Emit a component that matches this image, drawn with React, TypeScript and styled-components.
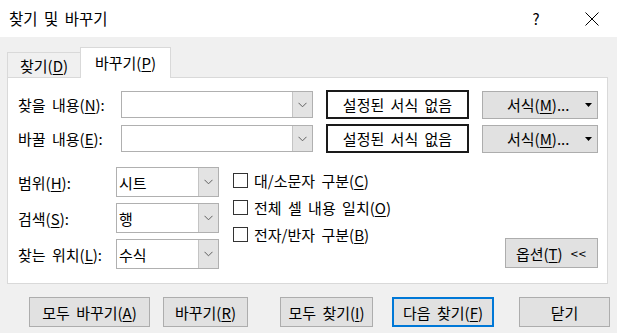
import React from "react";
import styled, { createGlobalStyle } from "styled-components";

const Global = createGlobalStyle`
  html, body { margin: 0; padding: 0; }
  body {
    width: 617px; height: 333px; overflow: hidden; background: #f0f0f0;
    font-family: "Noto Sans CJK KR", "Noto Sans", sans-serif; color: #000;
    word-spacing: 3px;
  }
  * { box-sizing: border-box; }
`;

const Window = styled.div`
  width: 617px; height: 333px; display: flex; flex-direction: column; background: #f0f0f0;
`;

const TitleBar = styled.div`
  height: 37px; flex-shrink: 0; background: #fff; display: flex; align-items: center; padding-left: 9px;
`;

const Title = styled.div`
  flex: 1; font-size: 15.5px; line-height: 1;
`;

const TitleButton = styled.div<{ $w: number; $ml?: number }>`
  width: ${(p) => p.$w}px; height: 37px; margin-left: ${(p) => p.$ml ?? 0}px;
  display: flex; align-items: center; justify-content: center; font-size: 15px;
`;

const Body = styled.div`
  flex: 1; display: flex; flex-direction: column; padding: 10px 9px 0 7px;
`;

const TabStrip = styled.div`
  height: 31px; display: flex; align-items: flex-end; margin-bottom: -1px; position: relative; z-index: 1;
`;

const Tab = styled.div<{ $active?: boolean; $w: number }>`
  width: ${(p) => p.$w}px;
  height: ${(p) => (p.$active ? 31 : 25)}px;
  margin-bottom: ${(p) => (p.$active ? 0 : 1)}px;
  background: ${(p) => (p.$active ? "#fff" : "#f0f0f0")};
  border: 1px solid #d9d9d9;
  border-bottom: none;
  border-right: ${(p) => (p.$active ? "1px solid #d9d9d9" : "none")};
  display: flex; align-items: center; justify-content: center;
  font-size: 15px; padding-bottom: ${(p) => (p.$active ? 2 : 0)}px;
`;

const Panel = styled.div`
  width: 601px; height: 207px; background: #fff; border: 1px solid #d9d9d9;
  padding: 12px 9px 0 10px; display: flex; flex-direction: column;
`;

const UpperGrid = styled.div`
  display: grid; grid-template-columns: 90px 192px 143px 116px; column-gap: 13px;
  grid-auto-rows: 29px; row-gap: 5px; align-items: center;
`;

const Label = styled.div`
  font-size: 15px; white-space: nowrap; line-height: 1;
`;

const Key = styled.span`
  text-decoration: underline; text-underline-offset: 2px; text-decoration-thickness: 1px;
`;

const Combo = styled.div<{ $h: number }>`
  height: ${(p) => p.$h}px; border: 1px solid #b0b0b0; background: #fff;
  display: flex; align-items: stretch;
`;

const ComboText = styled.div`
  flex: 1; display: flex; align-items: center; padding-left: 2px; font-size: 15px;
`;

const ComboButton = styled.div`
  width: 20px; background: #e3e3e3; border-left: 1px solid #c4c4c4;
  display: flex; align-items: center; justify-content: center;
`;

const FormatPreview = styled.div`
  height: 29px; border: 2px solid #1a1a1a; background: #fff;
  display: flex; align-items: center; justify-content: center; font-size: 15px;
`;

const Button = styled.div<{ $w?: number; $h?: number; $ml?: number; $default?: boolean }>`
  width: ${(p) => (p.$w ? `${p.$w}px` : "auto")};
  height: ${(p) => p.$h ?? 30}px;
  margin-left: ${(p) => p.$ml ?? 0}px;
  background: #e1e1e1;
  border: ${(p) => (p.$default ? "2px solid #0078d7" : "1px solid #adadad")};
  display: flex; align-items: center; justify-content: center;
  font-size: 15px; white-space: nowrap; flex-shrink: 0;
`;

const SplitButton = styled(Button)`
  justify-content: flex-start; padding: 0 5px 0 24px;
`;

const Caret = styled.svg`
  margin-left: auto;
`;

const Lower = styled.div`
  display: flex; margin-top: 14px; align-items: flex-start;
`;

const LowerGrid = styled.div`
  display: grid; grid-template-columns: 98px 103px; grid-auto-rows: 30px; row-gap: 6px; align-items: center;
`;

const CheckList = styled.div`
  margin-left: 14px; display: flex; flex-direction: column;
`;

const CheckRow = styled.div`
  height: 27px; display: flex; align-items: center; gap: 6px; font-size: 15px; white-space: nowrap;
`;

const CheckBox = styled.div`
  width: 15px; height: 15px; border: 1px solid #333; background: #fff; flex-shrink: 0;
`;

const OptionsButton = styled(Button)`
  margin-left: auto; align-self: flex-end; margin-bottom: 1px; gap: 8px;
`;

const Small = styled.span`
  font-size: 13px; letter-spacing: 1px;
`;

const BottomRow = styled.div`
  display: flex; align-items: center; margin-top: 13px; padding-left: 22px;
`;

const Chevron = () => (
  <svg width="9" height="6" viewBox="0 0 9 6">
    <polyline points="0.5,0.8 4.5,4.8 8.5,0.8" fill="none" stroke="#606060" strokeWidth="1" />
  </svg>
);

const ComboBox = ({ h, text }: { h: number; text?: string }) => (
  <Combo $h={h}>
    <ComboText>{text}</ComboText>
    <ComboButton>
      <Chevron />
    </ComboButton>
  </Combo>
);

const FormatButton = () => (
  <SplitButton $h={28}>
    <span>
      서식(<Key>M</Key>)...
    </span>
    <Caret width="7" height="4" viewBox="0 0 7 4">
      <polygon points="0,0 7,0 3.5,4" fill="#000" />
    </Caret>
  </SplitButton>
);

export default function App() {
  return (
    <>
      <Global />
      <Window>
        <TitleBar>
          <Title>찾기 및 바꾸기</Title>
          <TitleButton $w={40}>?</TitleButton>
          <TitleButton $w={50} $ml={11}>
            <svg width="14" height="14" viewBox="0 0 14 14">
              <line x1="0.5" y1="0.5" x2="13.5" y2="13.5" stroke="#000" strokeWidth="1" />
              <line x1="13.5" y1="0.5" x2="0.5" y2="13.5" stroke="#000" strokeWidth="1" />
            </svg>
          </TitleButton>
        </TitleBar>
        <Body>
          <TabStrip>
            <Tab $w={73}>
              찾기(<Key>D</Key>)
            </Tab>
            <Tab $w={91} $active>
              바꾸기(<Key>P</Key>)
            </Tab>
          </TabStrip>
          <Panel>
            <UpperGrid>
              <Label>
                찾을 내용(<Key>N</Key>):
              </Label>
              <ComboBox h={27} />
              <FormatPreview>설정된 서식 없음</FormatPreview>
              <FormatButton />
              <Label>
                바꿀 내용(<Key>E</Key>):
              </Label>
              <ComboBox h={27} />
              <FormatPreview>설정된 서식 없음</FormatPreview>
              <FormatButton />
            </UpperGrid>
            <Lower>
              <LowerGrid>
                <Label>
                  범위(<Key>H</Key>):
                </Label>
                <ComboBox h={30} text="시트" />
                <Label>
                  검색(<Key>S</Key>):
                </Label>
                <ComboBox h={30} text="행" />
                <Label>
                  찾는 위치(<Key>L</Key>):
                </Label>
                <ComboBox h={30} text="수식" />
              </LowerGrid>
              <CheckList>
                <CheckRow>
                  <CheckBox />
                  <span>
                    대/소문자 구분(<Key>C</Key>)
                  </span>
                </CheckRow>
                <CheckRow>
                  <CheckBox />
                  <span>
                    전체 셀 내용 일치(<Key>O</Key>)
                  </span>
                </CheckRow>
                <CheckRow>
                  <CheckBox />
                  <span>
                    전자/반자 구분(<Key>B</Key>)
                  </span>
                </CheckRow>
              </CheckList>
              <OptionsButton $w={93} $h={30}>
                <span>
                  옵션(<Key>T</Key>)
                </span>
                <Small>&lt;&lt;</Small>
              </OptionsButton>
            </Lower>
          </Panel>
          <BottomRow>
            <Button $w={121}>
              모두 바꾸기(<Key>A</Key>)
            </Button>
            <Button $w={85} $ml={13}>
              바꾸기(<Key>R</Key>)
            </Button>
            <Button $w={93} $ml={32}>
              모두 찾기(<Key>I</Key>)
            </Button>
            <Button $w={102} $ml={19} $default>
              다음 찾기(<Key>F</Key>)
            </Button>
            <Button $w={91} $ml={25}>
              닫기
            </Button>
          </BottomRow>
        </Body>
      </Window>
    </>
  );
}
